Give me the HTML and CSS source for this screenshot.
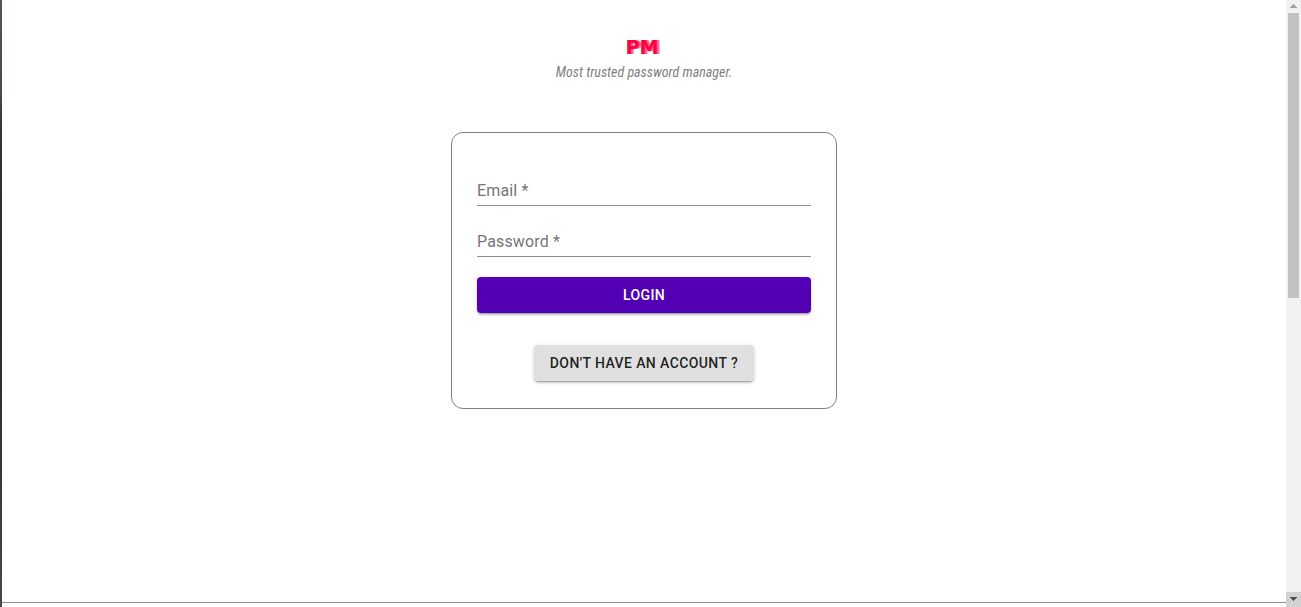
FILE: index.html
```html
<!DOCTYPE html>
<html lang="en">
<head>
<meta charset="utf-8">
<title>Password manager</title>
<link rel="stylesheet" href="styles.css">
</head>
<body>
<div class="window">
  <div class="edge"></div>
  <div class="page">
    <main class="content">
      <header class="brand">
        <h1 class="logo">PM</h1>
        <p class="tagline">Most trusted password manager.</p>
      </header>
      <form class="card">
        <div class="field">
          <label class="field-label" for="email">Email *</label>
          <input class="field-input" id="email" type="email" required>
        </div>
        <div class="field">
          <label class="field-label" for="password">Password *</label>
          <input class="field-input" id="password" type="password" required>
        </div>
        <button class="button primary" type="submit">LOGIN</button>
        <button class="button secondary" type="button">DON'T HAVE AN ACCOUNT ?</button>
      </form>
    </main>
    <footer class="footer"></footer>
  </div>
  <div class="scrollbar">
    <svg class="arrow" viewBox="0 0 15 13" aria-hidden="true"><path d="M7 4h1v1h1v1h1v1h1v1H4V7h1V6h1V5h1z" fill="#a3a3a3"/></svg>
    <div class="track"><div class="thumb"></div></div>
    <svg class="arrow down" viewBox="0 0 15 15" aria-hidden="true"><path d="M4 5h7v1h-1v1H9v1H8v1H7V8H6V7H5V6H4z" fill="#505050"/></svg>
  </div>
</div>
</body>
</html>
```
FILE: styles.css
```css
* { box-sizing: border-box; }

body {
  margin: 0;
  background: #fff;
  font-family: Roboto, "Liberation Sans", sans-serif;
}

.window {
  display: grid;
  grid-template-columns: 2px 1fr 15px;
  min-height: 100vh;
}

.edge {
  background: linear-gradient(#50565c, #454b50 15%, #33332f 22%, #2b2b28 50%, #36352f 75%, #4b4a40);
}

.page {
  display: flex;
  flex-direction: column;
}

.content {
  flex: 1;
  display: flex;
  flex-direction: column;
  align-items: center;
  padding-top: 36px;
}

.brand {
  text-align: center;
  margin-bottom: 48px;
}

.logo {
  margin: 0 0 2px;
  padding-right: 4px;
  font: bold 19px/22px "DejaVu Sans", sans-serif;
  color: #ff0040;
  text-shadow: 2px 0 0 #ff5c85, 3px 0 0 #ff9fb8;
}

.tagline {
  margin: 0;
  font: italic 14px/24px "Roboto Condensed", "Liberation Sans Narrow", "Liberation Sans", sans-serif;
  color: #808080;
}

.card {
  display: flex;
  flex-direction: column;
  width: 386px;
  max-width: 100%;
  padding: 38px 25px 27px;
  border: 1px solid #808080;
  border-radius: 12px;
}

.field {
  display: grid;
  height: 35px;
  margin-bottom: 16px;
  border-bottom: 1px solid #8c8c8c;
}

.field-label,
.field-input {
  grid-area: 1 / 1;
}

.field-label {
  align-self: center;
  padding-top: 6px;
  font-size: 16px;
  line-height: 20px;
  letter-spacing: 0.00938em;
  color: #757575;
  pointer-events: none;
}

.field-input {
  width: 100%;
  padding: 0;
  border: 0;
  outline: 0;
  background: transparent;
  font: inherit;
}

.button {
  height: 36px;
  padding: 0 16px;
  border: 0;
  border-radius: 4px;
  font: 500 14px/24px Roboto, sans-serif;
  letter-spacing: 0.02857em;
  box-shadow: 0 3px 1px -2px rgba(0, 0, 0, 0.2), 0 2px 2px 0 rgba(0, 0, 0, 0.14), 0 1px 5px 0 rgba(0, 0, 0, 0.12);
}

.primary {
  margin-top: 4px;
  background: #5300b4;
  color: #fff;
}

.secondary {
  align-self: center;
  margin-top: 32px;
  background: #e0e0e0;
  color: rgba(0, 0, 0, 0.87);
}

.footer {
  height: 5px;
  border-top: 1px solid #8c8c8c;
}

.scrollbar {
  display: flex;
  flex-direction: column;
  background: #f1f1f1;
}

.arrow {
  display: block;
  width: 15px;
  height: 13px;
}

.down {
  height: 15px;
  background: #d2d2d2;
}

.track {
  flex: 1;
  padding: 0 2px;
}

.thumb {
  height: 49.2%;
  background: #c1c1c1;
}
```
